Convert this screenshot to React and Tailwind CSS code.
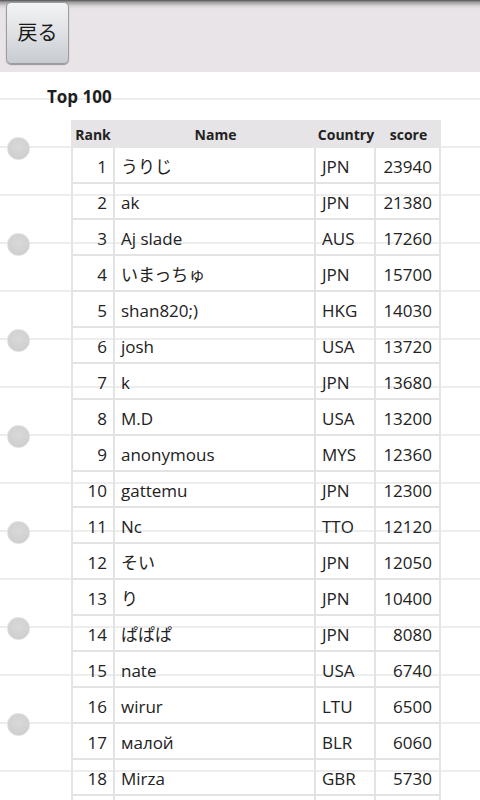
const rows = [
  [1, "うりじ", "JPN", 23940],
  [2, "ak", "JPN", 21380],
  [3, "Aj slade", "AUS", 17260],
  [4, "いまっちゅ", "JPN", 15700],
  [5, "shan820;)", "HKG", 14030],
  [6, "josh", "USA", 13720],
  [7, "k", "JPN", 13680],
  [8, "M.D", "USA", 13200],
  [9, "anonymous", "MYS", 12360],
  [10, "gattemu", "JPN", 12300],
  [11, "Nc", "TTO", 12120],
  [12, "そい", "JPN", 12050],
  [13, "り", "JPN", 10400],
  [14, "ぱぱぱ", "JPN", 8080],
  [15, "nate", "USA", 6740],
  [16, "wirur", "LTU", 6500],
  [17, "малой", "BLR", 6060],
  [18, "Mirza", "GBR", 5730],
  ["", "", "", ""],
];

const holes = [0, 1, 2, 3, 4, 5, 6, 7];

export default function App() {
  return (
    <div
      className="w-[480px] h-[800px] overflow-hidden flex flex-col bg-white text-[#222]"
      style={{ fontFamily: '"Open Sans", "Noto Sans CJK JP", sans-serif' }}
    >
      {/* title bar */}
      <div className="h-[72px] shrink-0 bg-[linear-gradient(to_bottom,#505050_0px,#9a9a9a_2px,#d8d4d7_6px,#e8e4e7_9px,#e8e4e7_100%)] pl-[6px] pt-[2px]">
        <button className="w-[63px] h-[62px] rounded-[5px] border border-[#9a9ca0] bg-[linear-gradient(to_bottom,#f2f3f4_0%,#e1e3e6_45%,#c8ccd1_100%)] shadow-[0_1px_1px_rgba(0,0,0,0.35)] text-[20px] text-[#1a1a1a] leading-none">
          戻る
        </button>
      </div>

      {/* notebook page */}
      <div className="flex-1 flex bg-[linear-gradient(to_bottom,transparent_26px,#ededed_26px,#ededed_28px,transparent_28px)] bg-[length:100%_48px]">
        <div className="w-[47px] shrink-0 flex flex-col gap-[73px] pt-[65px] pl-[7px]">
          {holes.map((h) => (
            <div
              key={h}
              className="w-[23px] h-[23px] shrink-0 rounded-full border border-[#dedede] bg-[radial-gradient(circle_at_50%_40%,#d9d9d9,#cbcbcb)]"
            />
          ))}
        </div>

        <div className="flex-1 flex flex-col">
          <div className="h-[48px] flex items-center pt-[2px] text-[17px] font-bold text-[#1e1e1e]">
            Top 100
          </div>
          <div className="ml-[24px] w-[370px]">
            <div className="h-[28px] flex items-center bg-[#e6e4e6] text-[14px] font-bold text-[#222]">
              <div className="w-[44px] text-center">Rank</div>
              <div className="w-[201px] text-center">Name</div>
              <div className="w-[60px] text-center">Country</div>
              <div className="w-[65px] text-center">score</div>
            </div>
            <div className="border-l-2 border-[#e3e3e3]">
              {rows.map(([rank, name, country, score], i) => (
                <div
                  key={i}
                  className="h-[36px] flex border-b-2 border-[#e3e3e3] text-[17px] text-[#222]"
                >
                  <div className="w-[42px] flex items-center justify-end pt-[3px] pr-[6px] border-r-2 border-[#e3e3e3]">
                    {rank}
                  </div>
                  <div className="w-[201px] flex items-center pt-[3px] pl-[6px] border-r-2 border-[#e3e3e3]">
                    {name}
                  </div>
                  <div className="w-[60px] flex items-center pt-[3px] pl-[6px] border-r-2 border-[#e3e3e3]">
                    {country}
                  </div>
                  <div className="w-[65px] flex items-center justify-end pt-[3px] pr-[7px] border-r-2 border-[#e3e3e3]">
                    {score}
                  </div>
                </div>
              ))}
            </div>
          </div>
        </div>
      </div>
    </div>
  );
}
